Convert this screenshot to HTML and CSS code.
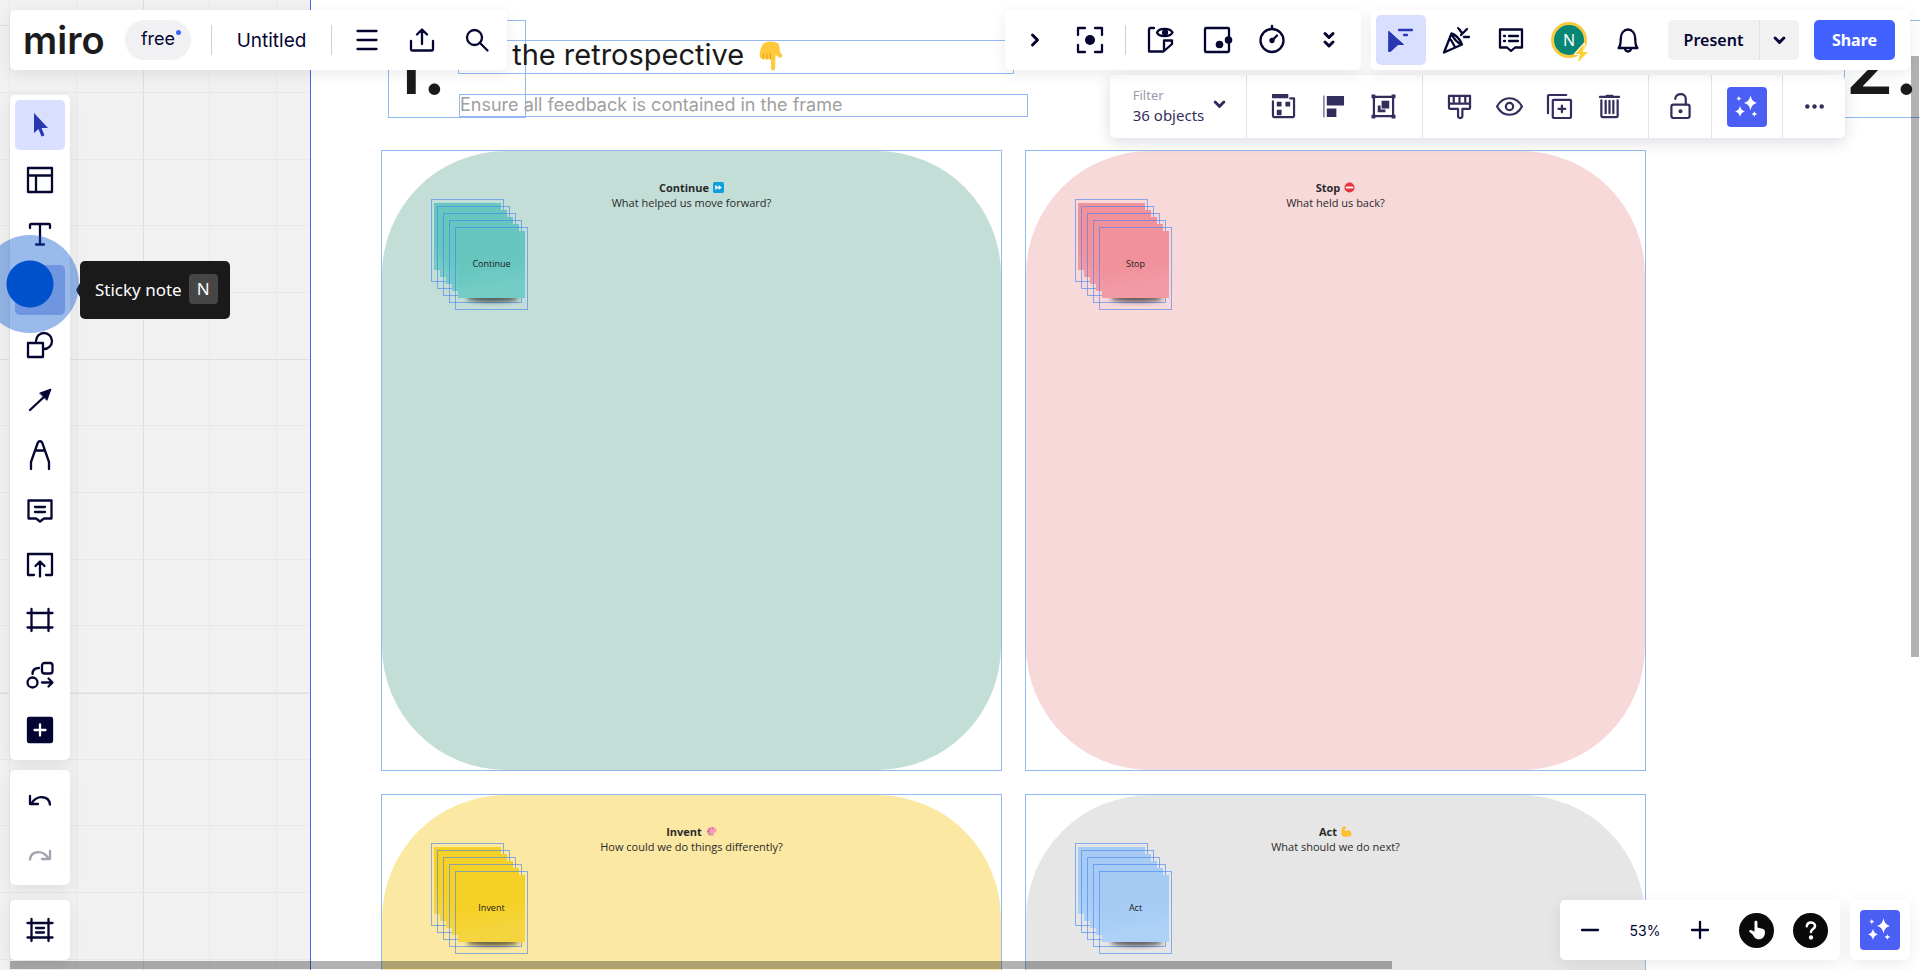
FILE: index.html
```html
<!DOCTYPE html>
<html lang="en">

<head>
  <meta charset="UTF-8">
  <meta name="viewport" content="width=device-width, initial-scale=1.0">
  <title>Untitled - Miro</title>
  <link rel="stylesheet" href="styles.css">
</head>

<body>
  <!-- Shared icons -->
  <svg class="hidden" aria-hidden="true">
    <symbol id="sparkles" viewBox="0 0 24 24">
      <path d="M15 2c.9 4 2 5.400 5.500 6.500C17 9.600 15.900 11 15 15c-.9-4-2-5.400-5.500-6.500C13 7.400 14.100 6 15 2zM6 11c.6 2.800 1.600 4 4.200 4.800C7.600 16.600 6.600 17.800 6 20.500c-.6-2.700-1.600-3.900-4.200-4.700C4.400 15 5.400 13.800 6 11zM5 2.500c.3 1.300.9 1.800 2.300 2.200C5.900 5.100 5.300 5.700 5 7c-.3-1.300-.9-1.900-2.300-2.300C4.100 4.300 4.700 3.800 5 2.500zM18.300 15.500c.3 1.500 1 2.200 2.500 2.600-1.500.4-2.200 1-2.500 2.500-.3-1.500-1-2.100-2.500-2.500 1.500-.4 2.200-1.100 2.500-2.600z" fill="currentColor" stroke="none"/>
    </symbol>
    <symbol id="chevron-down" viewBox="0 0 12 12">
      <path d="M2.500 4L6 7.500 9.500 4"/>
    </symbol>
  </svg>

  <main class="board">
    <section class="frame">
      <div class="selection step-number step-one">1.</div>
      <h1 class="selection step-title">Set the retrospective
        <svg class="hand-emoji" viewBox="0 0 26 34">
          <path d="M6 2c4-2 12-2 15 1 2 2 1 6 2 9l2 3c1 2-1 4-3 3l-4-3-.5 15c0 3-4.500 3-4.500 0V20H4c-3 0-4-4-3-8 1-5 2-8 5-10z" fill="#ffc83d"/>
          <path d="M4.500 14v5M8.500 14v6M12.500 14v6" stroke="#e79a1c" stroke-width="1"/>
        </svg>
      </h1>
      <p class="selection step-hint">Ensure all feedback is contained in the frame</p>
      <div class="selection step-number step-two">2.</div>

      <div class="card-grid">
        <article class="selection card">
          <div class="card-shape green">
            <h2>Continue
              <svg class="emoji" viewBox="0 0 12 12"><rect width="12" height="12" rx="2" fill="#0f9fdc"/><path d="M2.500 3.200L6 6 2.500 8.800zM6 3.200L9.500 6 6 8.800z" fill="#fff"/></svg>
            </h2>
            <p>What helped us move forward?</p>
          </div>
          <div class="stack teal-notes">
            <div class="note"></div>
            <div class="note"></div>
            <div class="note"></div>
            <div class="note"></div>
            <div class="note"><span>Continue</span></div>
          </div>
        </article>

        <article class="selection card">
          <div class="card-shape pink">
            <h2>Stop
              <svg class="emoji" viewBox="0 0 12 12"><circle cx="6" cy="6" r="5.500" fill="#e8353b"/><path d="M2 5h8v2H2z" fill="#fff"/></svg>
            </h2>
            <p>What held us back?</p>
          </div>
          <div class="stack pink-notes">
            <div class="note"></div>
            <div class="note"></div>
            <div class="note"></div>
            <div class="note"></div>
            <div class="note"><span>Stop</span></div>
          </div>
        </article>

        <article class="selection card">
          <div class="card-shape yellow">
            <h2>Invent
              <svg class="emoji" viewBox="0 0 12 12"><path d="M6 .8c3-.5 5.500 1.500 5.500 4 0 2-1.500 2-2.500 2.500s0 1.500-.5 2.500c-.6 1.500-3.500 1.500-5.200.3C1 8.500.3 6.500 1 4.500 1.700 2.300 3.500 1.200 6 .8z" fill="#f59db4"/><circle cx="4" cy="3.500" r=".9" fill="#4a7fd0"/><circle cx="2.700" cy="6" r=".9" fill="#c0325f"/><circle cx="4" cy="8.500" r=".9" fill="#4d9b67"/><circle cx="7" cy="2.800" r=".8" fill="#e05084"/></svg>
            </h2>
            <p>How could we do things differently?</p>
          </div>
          <div class="stack yellow-notes">
            <div class="note"></div>
            <div class="note"></div>
            <div class="note"></div>
            <div class="note"></div>
            <div class="note"><span>Invent</span></div>
          </div>
        </article>

        <article class="selection card">
          <div class="card-shape gray">
            <h2>Act
              <svg class="emoji" viewBox="0 0 12 12"><path d="M1.500 1.500C3 .2 5.500.3 5.500 1.500S4 3 3.800 3.300L4.500 6C6 4.500 8.500 4 10 5.500c2 2 2 5-.5 5.700-2.500.8-6.500.6-8.200-.7C-.2 9 .3 3 1.500 1.500z" fill="#fdc02f"/></svg>
            </h2>
            <p>What should we do next?</p>
          </div>
          <div class="stack blue-notes">
            <div class="note"></div>
            <div class="note"></div>
            <div class="note"></div>
            <div class="note"></div>
            <div class="note"><span>Act</span></div>
          </div>
        </article>
      </div>
    </section>
    <div class="scrollbar-x"></div>
    <div class="scrollbar-y"></div>
  </main>

  <!-- Top bar -->
  <header class="top-bar">
    <div class="panel board-panel">
      <a href="#" class="logo">miro</a>
      <span class="plan">free</span>
      <span class="divider"></span>
      <a href="#" class="board-name">Untitled</a>
      <span class="divider"></span>
      <div class="board-actions">
        <button class="tool" aria-label="Main menu"><svg viewBox="0 0 24 24"><path d="M2.500 3h19M2.500 12h19M2.500 21h19"/></svg></button>
        <button class="tool" aria-label="Export"><svg viewBox="0 0 24 24"><path d="M1 13v8c0 1 .5 1.500 1.500 1.500h19c1 0 1.500-.5 1.500-1.500v-8M12 16V2M7 6.500l5-5 5 5"/></svg></button>
        <button class="tool" aria-label="Search"><svg viewBox="0 0 24 24"><circle cx="9.500" cy="9.500" r="7.500"/><path d="M15 15l7.500 7.500"/></svg></button>
      </div>
    </div>

    <div class="top-right">
      <div class="panel tools-panel">
        <button class="tool" aria-label="Collapse"><svg viewBox="0 0 24 24"><path d="M9.500 7l5 5-5 5" stroke-width="3"/></svg></button>
        <button class="tool" aria-label="Focus mode"><svg viewBox="0 0 24 24"><path d="M0 7V0h7M17 0h7v7M24 17v7h-7M7 24H0v-7"/><circle cx="12" cy="12" r="5" fill="currentColor" stroke="none"/></svg></button>
        <span class="divider"></span>
        <button class="tool" aria-label="Private mode"><svg viewBox="0 0 24 24"><path d="M4 0H.5C-.5 0-1 .5-1 1.500V23.500h14.500L22 16v-3.500h-8V22"/><path d="M7 4.500C9-.3 20-.3 22.500 4.500 20 9.300 9 9.300 7 4.500z"/><circle cx="15" cy="4.500" r="2" fill="currentColor"/></svg></button>
        <button class="tool" aria-label="Voting"><svg viewBox="0 0 24 24"><rect x="0" y="0" width="24" height="24" rx="1"/><circle cx="14.500" cy="16.500" r="3.800" fill="currentColor" stroke="none"/><circle cx="23.500" cy="12" r="3.800" fill="currentColor" stroke="none"/></svg></button>
        <button class="tool" aria-label="Timer"><svg viewBox="0 0 24 24"><circle cx="12" cy="12.500" r="11.500"/><path d="M12 1v-3M12 12.500l5-5"/><circle cx="12" cy="12.500" r="1.500" fill="currentColor"/></svg></button>
        <button class="tool more-tools" aria-label="More tools"><svg viewBox="0 0 24 24"><path d="M8 5.500l4 4 4-4M8 14l4 4 4-4" stroke-width="3"/></svg></button>
      </div>

      <div class="panel people-panel">
        <button class="tool active" aria-label="Cursors"><svg viewBox="0 0 24 24"><path d="M0 3.500L14.500 16.500H9L1.500 23.500H0z" fill="currentColor" stroke-width="1"/><path d="M10 2h13M15 7h3"/></svg></button>
        <button class="tool" aria-label="Reactions"><svg viewBox="0 0 24 24"><path d="M0 24.500L7.500 5.500c3 .5 9 5.500 10.500 11zM7.500 5.500c2 5 5 9 10.500 11M7 12l4 7M17 7l6-6M15 1l3 4M20 9h5"/><circle cx="14" cy="0" r="1" fill="currentColor" stroke="none"/></svg></button>
        <button class="tool" aria-label="Comments"><svg viewBox="0 0 24 24"><path d="M1 1.500h22v18h-7l-4 3.500-4-3.500H1zM10 8h9M10 13h9M5 8h1M5 13h1"/></svg></button>
        <button class="avatar" aria-label="Your profile"><span>N</span>
          <svg class="bolt" viewBox="0 0 16 18"><path d="M10 0L1 10h5l-2 8 10-10H9z" fill="#ffd02f" stroke="#fff" stroke-width="2" paint-order="stroke"/></svg>
        </button>
        <button class="tool" aria-label="Notifications"><svg viewBox="0 0 24 24"><path d="M2.500 20h19c-2.500-2.500-2-6-2.300-10C19 5 16 1.500 12 1.500S5 5 4.800 10c-.3 4 .2 7.500-2.300 10zM9 20.500c.3 4 5.700 4 6 0"/></svg></button>
        <div class="present">
          <button class="present-btn">Present</button>
          <button class="present-arrow" aria-label="Present options"><svg viewBox="0 0 12 12"><use href="#chevron-down"/></svg></button>
        </div>
        <button class="share-btn">Share</button>
      </div>
    </div>
  </header>

  <!-- Toolbar for selected objects -->
  <div class="context-bar">
    <button class="filter">
      <span><small>Filter</small>36 objects</span>
      <svg viewBox="0 0 12 12"><use href="#chevron-down"/></svg>
    </button>
    <div class="context-group wide">
      <button aria-label="Layout"><svg viewBox="0 0 24 24"><path d="M1 6.500V22c0 .7.300 1 1 1h20c.7 0 1-.3 1-1V3.500h-4"/><path d="M0-1h17v4.500H0zM5 7h5v5H5zM14 7h5v5h-5zM5 15.500h5v5.500H5z" fill="currentColor" stroke="none"/></svg></button>
      <button aria-label="Align"><svg viewBox="0 0 24 24"><path d="M2 1v22" stroke-width="1"/><path d="M5 1h18v10H5zM5 14h10v9H5z" fill="currentColor" stroke="none"/></svg></button>
      <button aria-label="Group"><svg viewBox="0 0 24 24"><path d="M2 2h20v20H2z"/><path d="M-.5-.5h4v4h-4zM20.500-.5h4v4h-4zM-.5 20.500h4v4h-4zM20.500 20.500h4v4h-4zM10 6h8v8h-8zM6 11h3v4h5v3H6z" fill="currentColor" stroke="none"/></svg></button>
    </div>
    <div class="context-group wide">
      <button aria-label="Style"><svg viewBox="0 0 24 24"><path d="M1 1h22v12c0 1-.5 1.500-1.500 1.500H15V22c0 2.700-4.500 2.700-4.500 0v-7.500H2.500C1.500 14.500 1 14 1 13zM1 9h22M6 1v6M12 1v6M18 1v6"/></svg></button>
      <button aria-label="Visibility"><svg viewBox="0 0 24 24"><path d="M-1 12C5 .5 19 .5 25 12 19 23.500 5 23.500-1 12z"/><circle cx="12" cy="12" r="3.800"/></svg></button>
      <button aria-label="Duplicate"><svg viewBox="0 0 24 24"><path d="M0 19V1c0-.7.300-1 1-1h18"/><rect x="5" y="5" width="19" height="19" rx="1"/><path d="M14.500 11v7M11 14.500h7"/></svg></button>
      <button aria-label="Delete"><svg viewBox="0 0 24 24"><path d="M2 2h20M9 1h6M3.500 5.500V22c0 .7.300 1 1 1h15c.7 0 1-.3 1-1V5.500M8 6v13M12 6v13M16 6v13"/></svg></button>
    </div>
    <div class="context-group"><button aria-label="Lock"><svg viewBox="0 0 24 24"><rect x="2.500" y="10" width="19" height="14" rx="2"/><path d="M17.500 10V4c0-6.500-10-6.500-11 0"/><circle cx="12" cy="17" r="1" fill="currentColor"/></svg></button></div>
    <div class="context-group ai-group"><button class="ai-btn" aria-label="Miro AI"><svg viewBox="0 0 24 24"><use href="#sparkles"/></svg></button></div>
    <div class="context-group"><button aria-label="More"><svg viewBox="0 0 24 24"><g fill="currentColor" stroke="none"><circle cx="4.500" cy="12" r="2.300"/><circle cx="12" cy="12" r="2.300"/><circle cx="19.500" cy="12" r="2.300"/></g></svg></button></div>
  </div>

  <!-- Left toolbar -->
  <nav class="side-bar">
    <div class="panel side-panel">
      <button class="tool active" aria-label="Select"><svg viewBox="0 0 24 24"><path d="M6 0v20l4.500-4 3 7.500 3-1-3-7.500H20z" fill="currentColor" stroke="none"/></svg></button>
      <button class="tool" aria-label="Templates"><svg viewBox="0 0 24 24"><path d="M0 0h24v24H0zM0 7.500h24M8 7.500V24"/></svg></button>
      <button class="tool" aria-label="Text"><svg viewBox="0 0 24 24"><path d="M2 5V2c0-.7.300-1 1-1h18c.7 0 1 .3 1 1v3M12 1v20.500M8 21.500h8"/></svg></button>
      <div class="tool-wrap">
        <button class="tool hovered" aria-label="Sticky note"><svg viewBox="0 0 24 24"><path d="M2 2h14v13l-5 5H2zM16 15h-5v5"/></svg></button>
        <span class="click-marker"></span>
        <div class="tooltip" role="tooltip">Sticky note <kbd>N</kbd></div>
      </div>
      <button class="tool" aria-label="Shapes"><svg viewBox="0 0 24 24"><path d="M0 10h15v14H0zM8 8a8 8 0 1 1 8 8"/></svg></button>
      <button class="tool" aria-label="Connection line"><svg viewBox="0 0 24 24"><path d="M2 22L17 8"/><path d="M12 5l11-4-4 11z" fill="currentColor" stroke-width="1"/></svg></button>
      <button class="tool" aria-label="Pen"><svg viewBox="0 0 24 24"><path d="M3 26v-7L9.500.5c1-3 4-3 5 0L21 19v7M8 7.500h8"/></svg></button>
      <button class="tool" aria-label="Comment"><svg viewBox="0 0 24 24"><path d="M.5 2.500h23v18H16l-4 3-4-3H.5zM7 9h10M7 14h10"/></svg></button>
      <button class="tool" aria-label="Upload"><svg viewBox="0 0 24 24"><path d="M6 22H0V1h24v21h-6M12 23.500V9M7.500 13L12 8.500l4.500 4.500"/></svg></button>
      <button class="tool" aria-label="Frame"><svg viewBox="0 0 24 24"><path d="M3.500 1v22M20.500 1v22M-.5 5h25M-.5 19.500h25"/></svg></button>
      <button class="tool" aria-label="Diagram"><svg viewBox="0 0 24 24"><circle cx="4.500" cy="19.500" r="5"/><rect x="14" y="0" width="10.500" height="10.500" rx="2.500"/><path d="M4.500 11c0-4 2-6 6.500-6M14 19.500h10M20.500 15.500l4 4-4 4"/></svg></button>
      <button class="tool" aria-label="More apps"><svg viewBox="0 0 24 24"><rect x="0" y="0" width="24" height="24" rx="1" fill="currentColor"/><path d="M12 6.500v11M6.500 12h11" stroke="#fff"/></svg></button>
    </div>
    <div class="panel side-panel">
      <button class="tool" aria-label="Undo"><svg viewBox="0 0 24 24"><path d="M22 16.500C21 7.500 9 6.500 3.500 15.500M2 8v8h8"/></svg></button>
      <button class="tool" aria-label="Redo" disabled><svg viewBox="0 0 24 24"><path d="M2 16.500C3 7.500 15 6.500 20.500 15.500M22 8v8h-8"/></svg></button>
    </div>
    <div class="panel side-panel frames-panel">
      <button class="tool" aria-label="Frames"><svg viewBox="0 0 24 24"><path d="M3.500 1v22M20.500 1v22M-.5 5h25M-.5 19.500h25M8 10h8M8 14.500h8"/></svg></button>
    </div>
  </nav>

  <!-- Zoom and help -->
  <footer class="bottom-bar">
    <div class="panel zoom-panel">
      <button class="tool" aria-label="Zoom out"><svg viewBox="0 0 24 24"><path d="M4 12h16"/></svg></button>
      <button class="zoom-value">53%</button>
      <button class="tool" aria-label="Zoom in"><svg viewBox="0 0 24 24"><path d="M4 12h16M12 4v16"/></svg></button>
      <button class="round-btn" aria-label="Learning center"><svg viewBox="0 0 24 24"><path d="M9 2.500c0-2 3.500-2 3.500 0V9l6 1.500c2 .5 3.500 2 3 5-.5 5-3 7.500-7 7.500-5 0-6-3-8-6l-3.500-2.500c-1.500-1.500.5-3 2-2.500L9 14z" fill="#fff" stroke="none"/></svg></button>
      <button class="round-btn" aria-label="Help"><svg viewBox="0 0 24 24"><path d="M7 7.500c.5-6.500 10.500-5.500 9.800 0-.4 3.500-4.800 3.500-4.800 7" stroke="#fff" stroke-width="3"/><circle cx="12" cy="21" r="2.600" fill="#fff" stroke="none"/></svg></button>
    </div>
    <div class="panel ai-panel">
      <button class="ai-btn" aria-label="Miro AI"><svg viewBox="0 0 24 24"><use href="#sparkles"/></svg></button>
    </div>
  </footer>
</body>

</html>
```
FILE: styles.css
```css
/* General Styles */
* {
  box-sizing: border-box;
}

body {
  font-family: 'Noto Sans', 'Open Sans', sans-serif;
  margin: 0;
  color: #050532;
  height: 100vh;
  overflow: hidden;
  position: relative;
}

h1,
h2,
p {
  margin: 0;
}

a {
  color: inherit;
  text-decoration: none;
}

button {
  border: none;
  background: none;
  padding: 0;
  color: inherit;
  font: inherit;
  cursor: pointer;
  display: flex;
  align-items: center;
  justify-content: center;
}

svg {
  fill: none;
  stroke: currentColor;
  stroke-width: 2.3;
  stroke-linecap: round;
  stroke-linejoin: round;
  overflow: visible;
}

.hidden {
  position: absolute;
  width: 0;
  height: 0;
}

/* Board */
.board {
  position: absolute;
  inset: 0;
  overflow: hidden;
  background-color: #f1f1f1;
  background-image:
    linear-gradient(90deg, #dfdfdf 1px, transparent 1px),
    linear-gradient(#dfdfdf 1px, transparent 1px),
    linear-gradient(90deg, #e8e8e8 1px, transparent 1px 67px, #e8e8e8 67px 68px, transparent 68px 134px, #e8e8e8 134px 135px, transparent 135px),
    linear-gradient(#e8e8e8 1px, transparent 1px 67px, #e8e8e8 67px 68px, transparent 68px 134px, #e8e8e8 134px 135px, transparent 135px);
  background-size: 334px 334px, 334px 334px, 200px 200px, 200px 200px;
  background-position: 143px 25px, 143px 25px, 9px 25px, 9px 25px;
}

.frame {
  position: absolute;
  inset: 0 0 0 310px;
  background-color: #fff;
  border-left: 1px solid #2f74dc;
  overflow: hidden;
}

.selection {
  position: absolute;
  border: 1px solid #94b8f0;
}

.step-number {
  top: 20px;
  width: 138px;
  height: 98px;
  font-family: Inter, sans-serif;
  font-size: 80px;
  font-weight: 500;
  line-height: 88px;
  color: #1a1a1a;
}

.step-one {
  left: 77px;
}

.step-two {
  left: 1533px;
}

.step-title {
  top: 40px;
  left: 147px;
  width: 556px;
  height: 34px;
  display: flex;
  gap: 14px;
  font-family: Inter, sans-serif;
  font-size: 29px;
  font-weight: 400;
  line-height: 28px;
  color: #1a1a1a;
}

.hand-emoji {
  width: 26px;
  height: 31px;
  stroke: none;
}

.step-hint {
  top: 94px;
  left: 148px;
  width: 569px;
  height: 23px;
  font-family: Inter, sans-serif;
  font-size: 18px;
  line-height: 19px;
  color: #a0a0a0;
}

/* Cards */
.card-grid {
  position: absolute;
  top: 150px;
  left: 70px;
  display: grid;
  grid-template-columns: repeat(2, 621px);
  grid-auto-rows: 621px;
  gap: 23px;
}

.card {
  position: relative;
}

.card-shape {
  height: 100%;
  padding-top: 29px;
  border-radius: 20%;
  text-align: center;
  font-family: 'Open Sans', sans-serif;
  font-size: 11px;
  line-height: 15px;
  color: #2a2a2a;
}

.card-shape h2 {
  display: flex;
  justify-content: center;
  align-items: center;
  gap: 4px;
  font-size: 11px;
  line-height: 15px;
}

.emoji {
  width: 11px;
  height: 11px;
  stroke: none;
}

.green {
  background-color: #c3ded7;
}

.pink {
  background-color: #f7d9da;
}

.yellow {
  background-color: #fbe8a3;
}

.gray {
  background-color: #e6e6e6;
}

/* Sticky note stacks */
.stack {
  position: absolute;
  top: 48px;
  left: 49px;
}

.note {
  position: absolute;
  width: 73px;
  height: 83px;
  padding: 3px 2px 11px;
  border: 1px solid rgba(66, 128, 240, 0.6);
}

.note::before {
  content: '';
  position: absolute;
  left: 10px;
  right: 8px;
  bottom: 7px;
  height: 7px;
  border-radius: 50%;
  background-color: rgba(0, 0, 0, 0.6);
  filter: blur(2px);
}

.note::after {
  content: '';
  position: absolute;
  inset: 3px 2px 11px;
  background: linear-gradient(170deg, var(--note) 50%, var(--note-light) 80%);
}

.note span {
  position: relative;
  z-index: 1;
  display: block;
  font-family: 'Open Sans', sans-serif;
  font-size: 9px;
  line-height: 66px;
  text-align: center;
  color: #1a1a1a;
}

.note:nth-child(2) {
  top: 7px;
  left: 6px;
}

.note:nth-child(3) {
  top: 14px;
  left: 12px;
}

.note:nth-child(4) {
  top: 21px;
  left: 18px;
}

.note:nth-child(5) {
  top: 28px;
  left: 24px;
}

.teal-notes {
  --note: #67c6c0;
  --note-light: #74ccc6;
}

.pink-notes {
  --note: #f1919b;
  --note-light: #f29ba5;
}

.yellow-notes {
  --note: #f5d128;
  --note-light: #f5d53f;
}

.blue-notes {
  --note: #a6ccf5;
  --note-light: #add1f7;
}

/* Scrollbars */
.scrollbar-x,
.scrollbar-y {
  position: absolute;
  background-color: rgba(0, 0, 0, 0.3);
}

.scrollbar-x {
  left: 10px;
  bottom: 1px;
  width: 72%;
  height: 8px;
}

.scrollbar-y {
  top: 56px;
  right: 1px;
  width: 8px;
  height: 62%;
}

/* Panels and tools */
.panel {
  display: flex;
  align-items: center;
  background-color: #fff;
  border-radius: 5px;
  box-shadow: 0 4px 16px rgba(5, 0, 56, 0.08);
}

.tool {
  width: 50px;
  height: 50px;
  border-radius: 5px;
  flex-shrink: 0;
}

.tool svg {
  width: 24px;
  height: 24px;
}

.tool:disabled {
  color: #a3a2b2;
}

.tool.active {
  background-color: #d9dfff;
  color: #2a37b0;
}

.tool.hovered {
  background-color: #b9c3ec;
}

.divider {
  width: 1px;
  height: 30px;
  background-color: #cfced8;
}

/* Top bar */
.top-bar {
  position: absolute;
  z-index: 2;
  top: 10px;
  left: 10px;
  right: 10px;
  display: flex;
  justify-content: space-between;
}

.top-right {
  display: flex;
  gap: 10px;
}

.board-panel {
  height: 60px;
  padding: 0 5px 0 13px;
}

.logo {
  width: 102px;
  font-family: Inter, sans-serif;
  font-size: 38px;
  font-weight: 600;
  line-height: 56px;
  color: #1c1c1e;
}

.plan {
  position: relative;
  width: 66px;
  height: 40px;
  margin-right: 20px;
  border-radius: 20px;
  background-color: #f1f1f3;
  font-family: Inter, sans-serif;
  font-size: 18px;
  line-height: 38px;
  text-align: center;
}

.plan::after {
  content: '';
  position: absolute;
  top: 10px;
  right: 10px;
  width: 5px;
  height: 5px;
  border-radius: 50%;
  background-color: #4262ff;
}

.board-name {
  width: 119px;
  text-align: center;
  font-family: Inter, sans-serif;
  font-size: 19px;
}

.board-actions {
  display: flex;
  gap: 5px;
  padding-left: 10px;
}

.tools-panel {
  padding: 0 7px 0 5px;
  gap: 5px;
}

.tools-panel .divider {
  margin: 0 6px 0 5px;
}

.more-tools {
  margin-left: 2px;
}

.people-panel {
  padding: 0 15px 0 5px;
  gap: 5px;
}

.avatar {
  position: relative;
  width: 36px;
  height: 36px;
  margin: 0 11px 0 10px;
  border: 3px solid #f8ca3c;
  border-radius: 50%;
  background-color: #078575;
  color: #fff;
  font-size: 16px;
}

.bolt {
  position: absolute;
  right: -6px;
  bottom: -7px;
  width: 16px;
  height: 18px;
}

.present {
  display: flex;
  height: 40px;
  margin: 0 10px;
  border-radius: 5px;
  overflow: hidden;
  background-color: #f1f1f2;
}

.present-btn {
  width: 91px;
  font-size: 16px;
  font-weight: 600;
}

.present-arrow {
  width: 40px;
  border-left: 1px solid #e2e2e6;
}

.present-arrow svg,
.filter svg {
  width: 15px;
  height: 15px;
}

.share-btn {
  width: 81px;
  height: 40px;
  border-radius: 5px;
  background-color: #4262ff;
  color: #fff;
  font-size: 16px;
  font-weight: 700;
}

/* Selection toolbar */
.context-bar {
  position: absolute;
  z-index: 1;
  top: 75px;
  right: 75px;
  display: flex;
  height: 63px;
  background-color: #fff;
  border-radius: 5px;
  box-shadow: 0 4px 16px rgba(5, 0, 56, 0.14);
  color: #332d5c;
}

.filter {
  width: 136px;
  padding: 0 0 4px 4px;
  gap: 8px;
  text-align: left;
  font-size: 15px;
  line-height: 20px;
}

.filter small {
  display: block;
  font-size: 13px;
  color: #9b99ac;
}

.context-group {
  display: flex;
  border-left: 1px solid #e2e2e6;
  padding: 0 6px;
}

.context-group.wide {
  padding: 0 14px 0 11px;
}

.context-group button {
  width: 50px;
}

.context-group svg {
  width: 23px;
  height: 23px;
}

.context-group.ai-group {
  align-items: center;
  padding: 0 15px;
}

.context-group .ai-btn,
.ai-btn {
  width: 40px;
  height: 40px;
  border-radius: 4px;
  background-color: #4c5ff5;
  color: #fff;
}

.context-group .ai-btn svg,
.ai-btn svg {
  width: 28px;
  height: 28px;
}

/* Left toolbar */
.side-bar {
  position: absolute;
  z-index: 2;
  top: 95px;
  left: 10px;
  bottom: 10px;
  display: flex;
  flex-direction: column;
  gap: 10px;
}

.side-panel {
  flex-direction: column;
  gap: 5px;
  padding: 5px;
}

.frames-panel {
  margin-top: auto;
}

.tool-wrap {
  position: relative;
}

.click-marker {
  position: absolute;
  z-index: 1;
  top: -30px;
  left: -34px;
  width: 98px;
  height: 98px;
  border-radius: 50%;
  background: radial-gradient(circle, #0052cc 23px, rgba(0, 82, 204, 0.4) 24px);
}

.tooltip {
  position: absolute;
  top: -4px;
  left: 65px;
  display: flex;
  align-items: center;
  gap: 7px;
  height: 58px;
  padding: 0 12px 2px 15px;
  border-radius: 5px;
  background-color: #1a1a1a;
  color: #fff;
  font-size: 17px;
  white-space: nowrap;
}

.tooltip::before {
  content: '';
  position: absolute;
  left: -4px;
  top: 22px;
  border: 7px solid transparent;
  border-left: 0;
  border-right: 4px solid #1a1a1a;
}

.tooltip kbd {
  width: 29px;
  height: 30px;
  border-radius: 4px;
  background-color: #464646;
  font-family: inherit;
  line-height: 30px;
  text-align: center;
}

/* Bottom bar */
.bottom-bar {
  position: absolute;
  z-index: 2;
  right: 10px;
  bottom: 10px;
  display: flex;
  gap: 10px;
}

.zoom-panel {
  height: 60px;
  padding: 0 12px 0 5px;
}

.zoom-value {
  width: 60px;
  font-family: Inter, sans-serif;
  font-size: 14px;
}

.round-btn {
  width: 35px;
  height: 35px;
  margin-left: 19px;
  border-radius: 50%;
  background-color: #0a0a0a;
}

.zoom-panel .tool + .round-btn {
  margin-left: 14px;
}

.round-btn svg {
  width: 20px;
  height: 20px;
}

.ai-panel {
  padding: 10px;
}
```
